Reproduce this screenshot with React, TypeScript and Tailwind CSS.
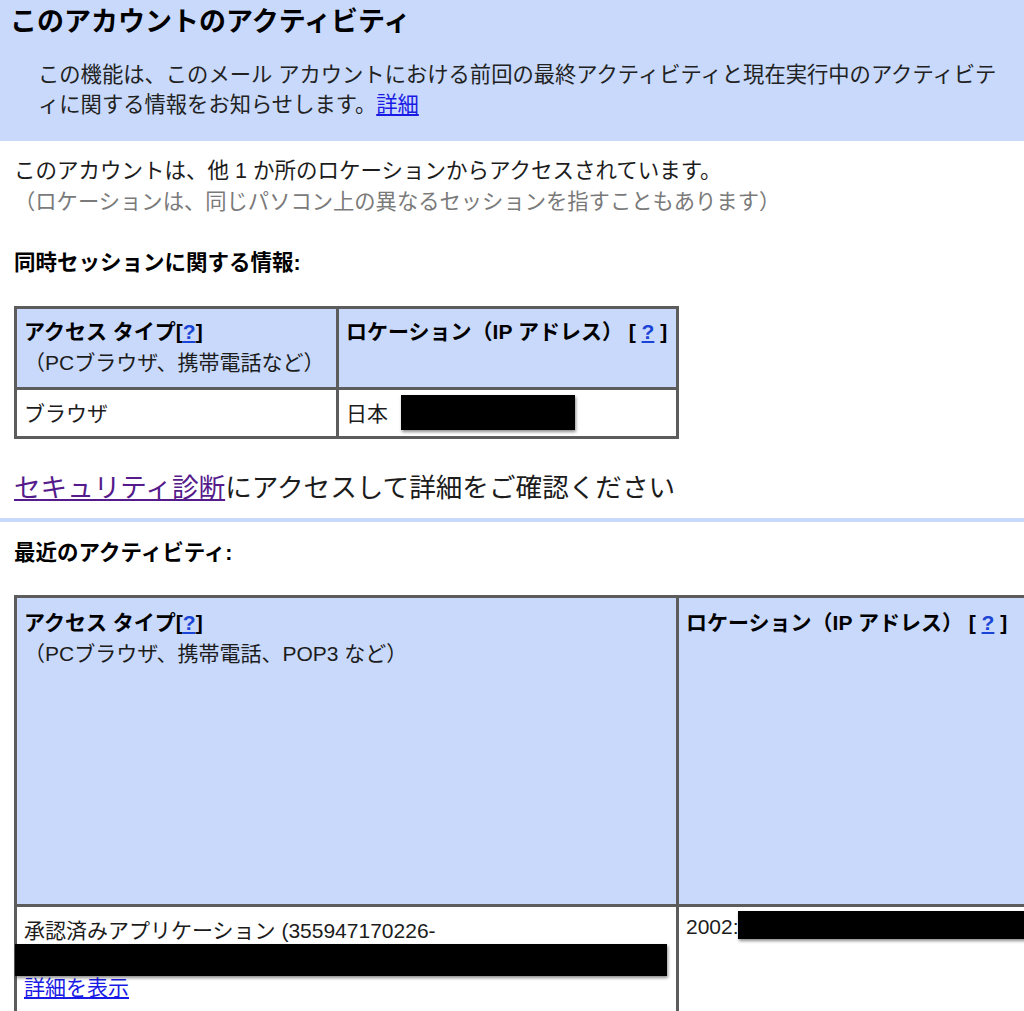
const font = '[font-family:"Liberation_Sans","Noto_Sans_CJK_JP",sans-serif]';

const Help = ({ spaced }: { spaced?: boolean }) => (
  <span>
    [{spaced ? ' ' : ''}
    <a href="#" className="text-[#1a44d6] underline">?</a>
    {spaced ? ' ' : ''}]
  </span>
);

const Redact = ({ className }: { className: string }) => (
  <span className={`absolute bg-black shadow-[1px_2px_3px_rgba(0,0,0,0.45)] ${className}`} />
);

export default function App() {
  return (
    <div className={`${font} w-[1024px] h-[1011px] overflow-hidden bg-white text-[#1c1c1c]`}>
      <div className="bg-[#c8d9fb] px-[10px] pt-[6px] pb-[21px]">
        <h1 className="text-[27px] font-bold leading-[32px] text-black">このアカウントのアクティビティ</h1>
        <p className="mt-[22px] pl-[28px] text-[21.3px] leading-[30px] text-[#222]">
          この機能は、このメール アカウントにおける前回の最終アクティビティと現在実行中のアクティビテ
          <br />
          ィに関する情報をお知らせします。<a href="#" className="text-[#1a1ae6] underline">詳細</a>
        </p>
      </div>

      <div className="px-[14px]">
        <p className="mt-[15px] text-[21.5px] leading-[31px]">
          このアカウントは、他 1 か所のロケーションからアクセスされています。
        </p>
        <p className="text-[21.3px] leading-[31px] text-[#7a7a7a]">
          （ロケーションは、同じパソコン上の異なるセッションを指すこともあります）
        </p>

        <h2 className="mt-[30px] text-[21.5px] font-bold leading-[30px] text-black">同時セッションに関する情報:</h2>

        <table className="mt-[28px] w-[665px] border-collapse border-[3px] border-[#5c5c5c] text-[21px] leading-[31px]">
          <tbody>
            <tr className="h-[81px] bg-[#c8d9fb]">
              <td className="w-[322px] border-[3px] border-[#5c5c5c] px-[7px] pt-[7px] pb-[4px] align-top">
                <div className="font-bold text-black">アクセス タイプ<Help /></div>
                <div>（PCブラウザ、携帯電話など）</div>
              </td>
              <td className="border-[3px] border-[#5c5c5c] px-[7px] pt-[7px] align-top">
                <div className="font-bold text-black">ロケーション（IP アドレス） <Help spaced /></div>
              </td>
            </tr>
            <tr className="h-[49px]">
              <td className="border-[3px] border-[#5c5c5c] px-[7px] align-middle">ブラウザ</td>
              <td className="relative border-[3px] border-[#5c5c5c] px-[7px] align-middle">
                日本
                <Redact className="left-[62px] top-[5px] h-[35px] w-[174px]" />
              </td>
            </tr>
          </tbody>
        </table>

        <p className="mt-[31px] text-[26.6px] leading-[36px]">
          <a href="#" className="text-[#551a8b] underline">セキュリティ診断</a>にアクセスして詳細をご確認ください
        </p>
      </div>

      <div className="mt-[12px] h-[4px] bg-[#c8d9fb]" />

      <div className="pl-[14px]">
        <h2 className="mt-[16px] text-[21.5px] font-bold leading-[30px] text-black">最近のアクティビティ:</h2>

        <table className="mt-[27px] w-[1040px] border-collapse border-[3px] border-[#5c5c5c] text-[21px] leading-[31px]">
          <tbody>
            <tr className="h-[309px] bg-[#c8d9fb]">
              <td className="w-[662px] border-[3px] border-[#5c5c5c] px-[7px] pt-[9px] align-top">
                <div className="font-bold text-black">アクセス タイプ<Help /></div>
                <div>（PCブラウザ、携帯電話、POP3 など）</div>
              </td>
              <td className="border-[3px] border-[#5c5c5c] px-[7px] pt-[9px] align-top">
                <div className="font-bold text-black">ロケーション（IP アドレス） <Help spaced /></div>
              </td>
            </tr>
            <tr className="h-[110px]">
              <td className="relative border-[3px] border-[#5c5c5c] px-[7px] pt-[8px] align-top">
                <div>承認済みアプリケーション (355947170226-</div>
                <div className="h-[26px]" />
                <a href="#" className="text-[#1a1ae6] underline">詳細を表示</a>
                <Redact className="left-[-2px] top-[37px] h-[32px] w-[652px]" />
              </td>
              <td className="relative border-[3px] border-[#5c5c5c] px-[7px] pt-[4px] align-top">
                2002:
                <Redact className="left-[59px] top-[4px] h-[28px] w-[320px]" />
              </td>
            </tr>
          </tbody>
        </table>
      </div>
    </div>
  );
}
